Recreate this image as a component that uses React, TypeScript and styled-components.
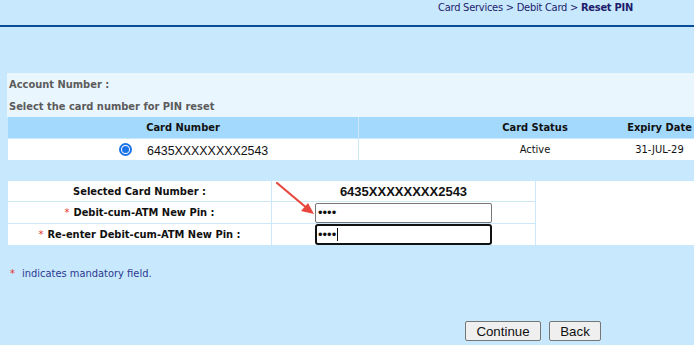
import React from "react";
import styled, { createGlobalStyle } from "styled-components";

const Global = createGlobalStyle`
  html, body { margin: 0; padding: 0; background: #c8e8fd; overflow: hidden; }
  body { font-family: "DejaVu Sans Condensed", "DejaVu Sans", sans-serif; font-size: 11px; }
`;

const Page = styled.div`
  position: relative;
  width: 694px;
  height: 345px;
  overflow: hidden;
`;

const Header = styled.div`
  height: 25px;
  display: flex;
  justify-content: flex-end;
  align-items: flex-start;
  padding-right: 61px;
  box-sizing: border-box;
`;

const Crumbs = styled.div`
  color: #1c1c6b;
  font-size: 11px;
  letter-spacing: -0.25px;
  line-height: 16px;
  b { font-weight: bold; }
`;

const Rule = styled.div`
  height: 2px;
  background: #0a4d97;
`;

const Content = styled.div`
  padding: 46px 0 0 7px;
`;

const AccountPanel = styled.div`
  background: #eaf6fe;
  height: 44px;
  display: flex;
  flex-direction: column;
`;

const AccountLine = styled.div`
  height: 22px;
  line-height: 23px;
  padding-left: 2px;
  font-weight: bold;
  color: #5b5b5b;
`;

const CardGrid = styled.div`
  margin-left: 1px;
  width: 720px;
  display: grid;
  grid-template-columns: 351px 120px 112px 137px;
`;

const HeadCell = styled.div<{ $divider?: boolean }>`
  background: #a2d9fc;
  height: 21px;
  line-height: 21px;
  text-align: center;
  font-weight: bold;
  color: #111;
  border-right: ${(p) => (p.$divider ? "1px solid #cde8fb" : "none")};
  border-bottom: 1px solid #c8e8fd;
`;

const BodyCell = styled.div<{ $divider?: boolean }>`
  background: #fff;
  height: 21px;
  line-height: 21px;
  text-align: center;
  color: #111;
  border-right: ${(p) => (p.$divider ? "1px solid #cde8fb" : "none")};
  display: flex;
  align-items: center;
  justify-content: center;
`;

const RadioWrap = styled.div`
  width: 100%;
  display: flex;
  align-items: center;
  padding-left: 111px;
  gap: 15px;
`;

const Radio = styled.span`
  width: 13px;
  height: 13px;
  border-radius: 50%;
  border: 2px solid #1a73e8;
  box-sizing: border-box;
  display: flex;
  align-items: center;
  justify-content: center;
  &::after {
    content: "";
    width: 7px;
    height: 7px;
    border-radius: 50%;
    background: #1a73e8;
  }
`;

const CardNo = styled.span`
  font-family: "Liberation Sans", Arial, sans-serif;
  font-size: 12.4px;
  color: #111;
  padding-top: 3px;
`;

const FormGrid = styled.div`
  margin-top: 21px;
  margin-left: 1px;
  display: grid;
  grid-template-columns: 263px 1px 263px 1px 1fr;
  grid-template-rows: 20px 1px 21px 1px 21px;
  background: #fff;
  height: 64px;
`;

const Label = styled.div<{ $row: number }>`
  grid-column: 1;
  grid-row: ${(p) => p.$row};
  display: flex;
  align-items: center;
  justify-content: center;
  font-weight: bold;
  color: #111;
`;

const Star = styled.span`
  color: #e3322b;
  font-weight: normal;
  margin-right: 4px;
`;

const VLine = styled.div<{ $col: number }>`
  grid-column: ${(p) => p.$col};
  grid-row: 1 / 6;
  background: #cde8fb;
`;

const HLine = styled.div<{ $row: number }>`
  grid-column: 1 / 4;
  grid-row: ${(p) => p.$row};
  background: #cde8fb;
`;

const Value = styled.div<{ $row: number }>`
  grid-column: 3;
  grid-row: ${(p) => p.$row};
  display: flex;
  align-items: center;
  justify-content: center;
`;

const BoldNo = styled.span`
  font-family: "Liberation Sans", Arial, sans-serif;
  font-weight: bold;
  font-size: 13px;
  color: #111;
`;

const InputBox = styled.div`
  position: relative;
  display: flex;
`;

const PinInput = styled.input<{ $focused?: boolean }>`
  width: 177px;
  height: ${(p) => (p.$focused ? "21px" : "20px")};
  box-sizing: border-box;
  border: ${(p) => (p.$focused ? "2px solid #111" : "1px solid #767676")};
  border-radius: ${(p) => (p.$focused ? "3px" : "2px")};
  padding: 0 ${(p) => (p.$focused ? "1px" : "2px")};
  font-family: "Liberation Sans", Arial, sans-serif;
  font-size: 13px;
  color: #111;
  background: #fff;
  outline: none;
`;

const Caret = styled.span`
  position: absolute;
  left: 22px;
  top: 4px;
  width: 1px;
  height: 13px;
  background: #111;
`;

const Note = styled.div`
  margin-top: 22px;
  padding-left: 3px;
  color: #2b3990;
  font-size: 11px;
  display: flex;
  gap: 7px;
`;

const NoteStar = styled.span`
  color: #e3322b;
`;

const Buttons = styled.div`
  position: absolute;
  left: 0;
  right: 0;
  top: 321px;
  display: flex;
  justify-content: flex-end;
  gap: 8px;
  padding-right: 93px;
`;

const Btn = styled.button<{ $w: number }>`
  width: ${(p) => p.$w}px;
  height: 20px;
  padding: 0;
  background: #efefef;
  border: 1px solid #767676;
  border-radius: 2px;
  font-family: "Liberation Sans", Arial, sans-serif;
  font-size: 13.3px;
  color: #111;
`;

const Arrow = styled.svg`
  position: absolute;
  left: 270px;
  top: 178px;
`;

export default function App() {
  return (
    <>
      <Global />
      <Page>
        <Header>
          <Crumbs>
            Card Services &gt; Debit Card &gt; <b>Reset PIN</b>
          </Crumbs>
        </Header>
        <Rule />
        <Content>
          <AccountPanel>
            <AccountLine>Account Number :</AccountLine>
            <AccountLine>Select the card number for PIN reset</AccountLine>
          </AccountPanel>
          <CardGrid>
            <HeadCell $divider>Card Number</HeadCell>
            <HeadCell />
            <HeadCell>Card Status</HeadCell>
            <HeadCell>Expiry Date</HeadCell>
            <BodyCell $divider>
              <RadioWrap>
                <Radio />
                <CardNo>6435XXXXXXXX2543</CardNo>
              </RadioWrap>
            </BodyCell>
            <BodyCell />
            <BodyCell>Active</BodyCell>
            <BodyCell>31-JUL-29</BodyCell>
          </CardGrid>
          <FormGrid>
            <Label $row={1}>Selected Card Number :</Label>
            <Value $row={1}>
              <BoldNo>6435XXXXXXXX2543</BoldNo>
            </Value>
            <HLine $row={2} />
            <Label $row={3}>
              <Star>*</Star>Debit-cum-ATM New Pin :
            </Label>
            <Value $row={3}>
              <PinInput type="password" defaultValue="1234" readOnly />
            </Value>
            <HLine $row={4} />
            <Label $row={5}>
              <Star>*</Star>Re-enter Debit-cum-ATM New Pin :
            </Label>
            <Value $row={5}>
              <InputBox>
                <PinInput $focused type="password" defaultValue="1234" readOnly />
                <Caret />
              </InputBox>
            </Value>
            <VLine $col={2} />
            <VLine $col={4} />
          </FormGrid>
          <Note>
            <NoteStar>*</NoteStar>
            <span>indicates mandatory field.</span>
          </Note>
        </Content>
        <Arrow width="50" height="42" viewBox="0 0 50 42">
          <line x1="7" y1="5" x2="38" y2="31" stroke="#e8473d" strokeWidth="2.2" strokeLinecap="round" />
          <polygon points="44,36 31,33 38,25" fill="#e8473d" />
        </Arrow>
        <Buttons>
          <Btn $w={76}>Continue</Btn>
          <Btn $w={52}>Back</Btn>
        </Buttons>
      </Page>
    </>
  );
}
